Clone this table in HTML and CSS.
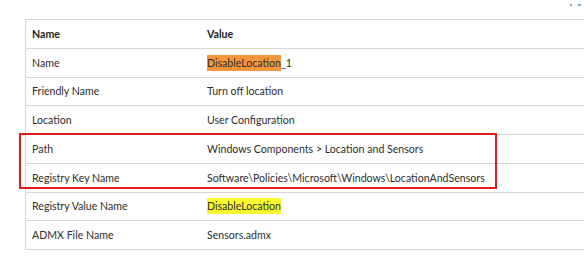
FILE: index.html
```html
<!DOCTYPE html>
<html lang="en">
<head>
    <meta charset="UTF-8">
    <title>Policy details</title>
    <link rel="stylesheet" href="styles.css">
</head>
<body>
    <div class="topbar">
        <svg class="expand" width="12" height="4" viewBox="0 0 12 4">
            <rect x="0" y="1" width="2" height="2" fill="#7fa8d8"/>
            <rect x="8" y="1" width="3" height="2" fill="#7fa8d8"/>
        </svg>
    </div>

    <div class="sheet">
        <div class="props">
            <div class="row head">
                <div class="cell key">Name</div>
                <div class="cell">Value</div>
            </div>
            <div class="row">
                <div class="cell key">Name</div>
                <div class="cell"><span class="hl-orange">DisableLocation</span>_1</div>
            </div>
            <div class="row">
                <div class="cell key">Friendly Name</div>
                <div class="cell">Turn off location</div>
            </div>
            <div class="row">
                <div class="cell key">Location</div>
                <div class="cell">User Configuration</div>
            </div>
            <div class="row">
                <div class="cell key">Path</div>
                <div class="cell">Windows Components &gt; Location and Sensors</div>
            </div>
            <div class="row">
                <div class="cell key">Registry Key Name</div>
                <div class="cell">Software\Policies\Microsoft\Windows\LocationAndSensors</div>
            </div>
            <div class="row">
                <div class="cell key">Registry Value Name</div>
                <div class="cell"><span class="hl-yellow">DisableLocation</span></div>
            </div>
            <div class="row">
                <div class="cell key">ADMX File Name</div>
                <div class="cell">Sensors.admx</div>
            </div>
        </div>

        <!-- red box around path + key rows -->
        <div class="callout"></div>
    </div>
</body>
</html>
```
FILE: styles.css
```css
body {
    margin: 0;
    background: #ffffff;
    font-family: Lato, "Open Sans", sans-serif;
    font-size: 10.6px;
    color: #2e2e2e;
}

.topbar {
    height: 19px;
    position: relative;
}

.expand {
    position: absolute;
    right: 2px;
    top: 3px;
}

.sheet {
    position: relative;
    margin-left: 25px;
}

.props {
    border-top: 1px solid #d6d6d6;
    border-left: 1px solid #d6d6d6;
}

.row {
    display: grid;
    grid-template-columns: 175px 1fr;
    height: 28.75px;
    box-sizing: border-box;
    border-bottom: 1px solid #d6d6d6;
}

.cell {
    display: flex;
    align-items: center;
    padding-left: 6px;
    white-space: nowrap;
}

.head .cell {
    font-weight: bold;
    color: #1e1e1e;
}

.hl-orange {
    background: #f7953d;
    padding: 2px 0;
}

.hl-yellow {
    background: #fbfa2e;
    padding: 2px 0;
}

.callout {
    position: absolute;
    left: -6px;
    top: 114px;
    width: 474px;
    height: 52px;
    border: 2px solid #e3191c;
}
```
